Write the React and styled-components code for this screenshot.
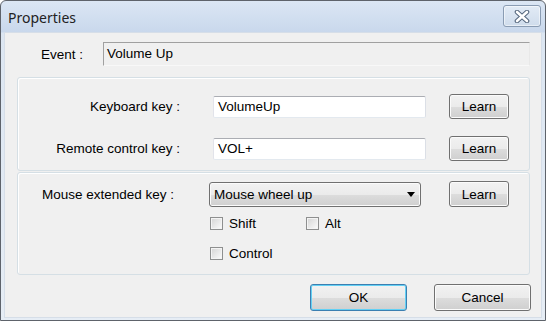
import React from "react";
import styled, { createGlobalStyle } from "styled-components";

const GlobalStyle = createGlobalStyle`
  html, body {
    margin: 0;
    padding: 0;
    background: #ffffff;
  }
  body {
    font-family: "Liberation Sans", Arial, sans-serif;
    font-size: 13.5px;
    color: #000;
  }
`;

const Window = styled.div`
  box-sizing: border-box;
  width: 546px;
  height: 321px;
  border: 1px solid #5e636b;
  border-radius: 6px 6px 0 0;
  background: linear-gradient(#dbe6f4 0px, #c9d8ec 31px, #dce6f2 32px, #e6edf5 100%);
  display: flex;
  flex-direction: column;
`;

const TitleBar = styled.div`
  height: 31px;
  display: flex;
  align-items: flex-start;
  padding-left: 7px;
  flex-shrink: 0;
`;

const Title = styled.span`
  font-family: "Noto Sans", "Open Sans", sans-serif;
  font-size: 14px;
  color: #222;
  line-height: 34px;
`;

const CloseButton = styled.button`
  box-sizing: border-box;
  margin: 4px 4px 0 auto;
  width: 38px;
  height: 22px;
  padding: 0;
  border: 1px solid #8a9cb3;
  border-radius: 3px;
  background: linear-gradient(#e2ebf6, #cfdcec);
  box-shadow: inset 0 0 0 1px rgba(255, 255, 255, 0.5);
  display: flex;
  align-items: center;
  justify-content: center;
`;

const Body = styled.div`
  box-sizing: border-box;
  flex: 1;
  margin: 0 3px 2px 3px;
  border: 1px solid #d6dee8;
  background: #f0f0f0;
  padding: 9px 11px 0 12px;
  display: flex;
  flex-direction: column;
`;

const EventRow = styled.div`
  display: flex;
  align-items: center;
  height: 24px;
`;

const EventLabel = styled.span`
  box-sizing: border-box;
  width: 86px;
  padding-left: 24px;
`;

const ReadOnlyField = styled.div`
  box-sizing: border-box;
  width: 427px;
  height: 24px;
  border: 1px solid;
  border-color: #a0a0a0 #e8e8e8 #f8f8f8 #a0a0a0;
  background: #f0f0f0;
  padding-left: 3px;
  line-height: 22px;
`;

const Group = styled.div`
  box-sizing: border-box;
  width: 513px;
  height: ${p => p.$height}px;
  margin-top: ${p => p.$top}px;
  border: 1px solid #d5dfe5;
  border-radius: 3px;
  box-shadow: inset 1px 1px 0 #ffffff;
  padding-top: ${p => p.$padTop}px;
  display: flex;
  flex-direction: column;
`;

const KeyRow = styled.div`
  display: flex;
  align-items: center;
  height: 25px;
  margin-top: ${p => p.$top || 0}px;
`;

const RightLabel = styled.span`
  width: 162px;
  flex-shrink: 0;
  text-align: right;
  white-space: nowrap;
`;

const TextInput = styled.div`
  box-sizing: border-box;
  width: 213px;
  height: 22px;
  margin: 0 23px 0 33px;
  border: 1px solid;
  border-color: #abadb3 #dbdfe6 #e3e9ef #e2e3ea;
  border-radius: 2px;
  background: #ffffff;
  padding-left: 4px;
  line-height: 20px;
`;

const Button = styled.button`
  box-sizing: border-box;
  flex-shrink: 0;
  width: ${p => p.$width || 60}px;
  height: ${p => p.$height || 25}px;
  padding: 0;
  font-family: "Liberation Sans", Arial, sans-serif;
  font-size: 13.5px;
  color: #000;
  border: 1px solid ${p => (p.$default ? "#3c7fb1" : "#707070")};
  border-radius: 3px;
  background: linear-gradient(#f2f2f2 0%, #ebebeb 50%, #dddddd 50%, #cfcfcf 100%);
  box-shadow: inset 0 0 0 1px ${p => (p.$default ? "#63d0f4" : "#fbfbfb")};
`;

const MouseRow = styled.div`
  display: flex;
  align-items: center;
  height: 26px;
`;

const LeftLabel = styled.span`
  box-sizing: border-box;
  width: 191px;
  flex-shrink: 0;
  padding-left: 24px;
  white-space: nowrap;
`;

const Select = styled.div`
  box-sizing: border-box;
  width: 212px;
  height: 25px;
  margin-right: 28px;
  border: 1px solid #707070;
  border-radius: 3px;
  background: linear-gradient(#f2f2f2 0%, #ebebeb 50%, #dddddd 50%, #cfcfcf 100%);
  box-shadow: inset 0 0 0 1px #fbfbfb;
  display: flex;
  align-items: center;
  justify-content: space-between;
  padding: 0 5px 0 4px;
`;

const Arrow = styled.span`
  width: 0;
  height: 0;
  border-left: 4px solid transparent;
  border-right: 4px solid transparent;
  border-top: 5px solid #000;
`;

const CheckGrid = styled.div`
  display: grid;
  grid-template-columns: 96px auto;
  row-gap: 17px;
  margin: 10px 0 0 192px;
`;

const CheckItem = styled.label`
  display: flex;
  align-items: center;
  gap: 6px;
  height: 13px;
`;

const Box = styled.span`
  box-sizing: border-box;
  width: 13px;
  height: 13px;
  border: 1px solid #8e8f8f;
  background: linear-gradient(135deg, #d4d4d4 0%, #f4f4f4 80%, #ffffff 100%);
  box-shadow: inset 0 0 0 1px #f4f4f4;
`;

const Footer = styled.div`
  display: flex;
  justify-content: flex-end;
  gap: 27px;
  margin: 9px -1px 0 0;
`;

const CloseIcon = () => (
  <svg width="16" height="13" viewBox="0 0 16 13">
    <path d="M3 2 L13 11 M13 2 L3 11" stroke="#53657c" strokeWidth="4.6" strokeLinecap="round" />
    <path d="M3 2 L13 11 M13 2 L3 11" stroke="#ffffff" strokeWidth="2.6" strokeLinecap="round" />
  </svg>
);

const Check = ({ label }) => (
  <CheckItem>
    <Box />
    <span>{label}</span>
  </CheckItem>
);

const App = () => {
  return (
    <>
      <GlobalStyle />
      <Window>
        <TitleBar>
          <Title>Properties</Title>
          <CloseButton>
            <CloseIcon />
          </CloseButton>
        </TitleBar>
        <Body>
          <EventRow>
            <EventLabel>Event :</EventLabel>
            <ReadOnlyField>Volume Up</ReadOnlyField>
          </EventRow>

          <Group $height={94} $top={11} $padTop={16}>
            <KeyRow>
              <RightLabel>Keyboard key :</RightLabel>
              <TextInput>VolumeUp</TextInput>
              <Button>Learn</Button>
            </KeyRow>
            <KeyRow $top={17}>
              <RightLabel>Remote control key :</RightLabel>
              <TextInput>VOL+</TextInput>
              <Button>Learn</Button>
            </KeyRow>
          </Group>

          <Group $height={103} $top={1} $padTop={8}>
            <MouseRow>
              <LeftLabel>Mouse extended key :</LeftLabel>
              <Select>
                <span>Mouse wheel up</span>
                <Arrow />
              </Select>
              <Button $height={26}>Learn</Button>
            </MouseRow>
            <CheckGrid>
              <Check label="Shift" />
              <Check label="Alt" />
              <Check label="Control" />
            </CheckGrid>
          </Group>

          <Footer>
            <Button $width={97} $height={27} $default>
              OK
            </Button>
            <Button $width={97} $height={27}>
              Cancel
            </Button>
          </Footer>
        </Body>
      </Window>
    </>
  );
};

export default App;
